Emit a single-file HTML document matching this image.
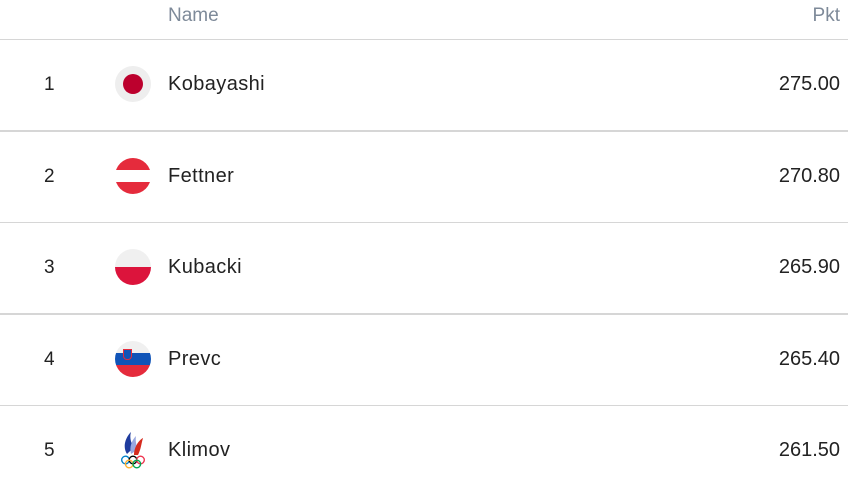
<!DOCTYPE html>
<html><head><style>
body{margin:0;width:852px;height:491px;background:#fff;font-family:"Liberation Sans",sans-serif;color:#222;overflow:hidden;position:relative}
.h{position:absolute;top:5px;font-size:19px;color:#7e8a99}
.line{position:absolute;left:0;width:848px;height:1px;background:#d6d6d6}
.r{position:absolute;left:0;width:852px;height:36px}
.rk{position:absolute;left:44px;top:8px;font-size:19px}
.fl{position:absolute;left:115px;top:0;width:36px;height:36px;border-radius:50%;overflow:hidden}
.nm{position:absolute;left:168px;top:7px;font-size:20px;letter-spacing:0.4px}
.pt{position:absolute;right:12px;top:7px;font-size:20px}
</style></head><body>
<div class="h" style="left:168px">Name</div>
<div class="h" style="right:12px">Pkt</div>
<div class="line" style="top:39px"></div>
<div class="line" style="top:130px;height:2px"></div>
<div class="line" style="top:222px"></div>
<div class="line" style="top:313px;height:2px"></div>
<div class="line" style="top:405px"></div>

<div class="r" style="top:66px"><span class="rk">1</span><div class="fl" style="background:#eee"><div style="position:absolute;left:8px;top:8px;width:20px;height:20px;border-radius:50%;background:#bc002d"></div></div><span class="nm">Kobayashi</span><span class="pt">275.00</span></div>

<div class="r" style="top:158px"><span class="rk">2</span><div class="fl" style="background:linear-gradient(#e52b3c 0 33%,#fff 33% 67%,#e52b3c 67%)"></div><span class="nm">Fettner</span><span class="pt">270.80</span></div>

<div class="r" style="top:249px"><span class="rk">3</span><div class="fl" style="background:linear-gradient(#f0f0f0 0 50%,#dc143c 50%)"></div><span class="nm">Kubacki</span><span class="pt">265.90</span></div>

<div class="r" style="top:341px"><span class="rk">4</span><div class="fl" style="background:linear-gradient(#f0f0f0 0 33%,#1054b8 33% 67%,#e52b3c 67%)"><div style="position:absolute;left:8px;top:8px;width:7px;height:9px;background:#1054b8;border:1px solid #e52b3c;border-radius:0 0 4px 4px"></div></div><span class="nm">Prevc</span><span class="pt">265.40</span></div>

<div class="r" style="top:432px"><span class="rk">5</span>
<svg style="position:absolute;left:118px;top:-4px" width="30" height="44" viewBox="0 0 30 44">
<path d="M9 26 C4 18 8 9 13 4 C11 11 14 16 16 20 C13 22 11 24 9 26Z" fill="#1f3c9e"/>
<path d="M13 26 C11 19 14 12 18 8 C17 13 19 18 19 22Z" fill="#9aa8e0"/>
<path d="M16 27 C16 19 21 12 25 10 C23 17 23 21 20 27Z" fill="#d52b1e"/>
<g fill="none" stroke-width="1.4"><circle cx="7.5" cy="32" r="3.8" stroke="#0081c8"/><circle cx="15" cy="32" r="3.8" stroke="#000"/><circle cx="22.5" cy="32" r="3.8" stroke="#ee334e"/><circle cx="11.2" cy="36" r="3.8" stroke="#fcb131"/><circle cx="18.8" cy="36" r="3.8" stroke="#00a651"/></g>
</svg>
<span class="nm">Klimov</span><span class="pt">261.50</span></div>
</body></html>
